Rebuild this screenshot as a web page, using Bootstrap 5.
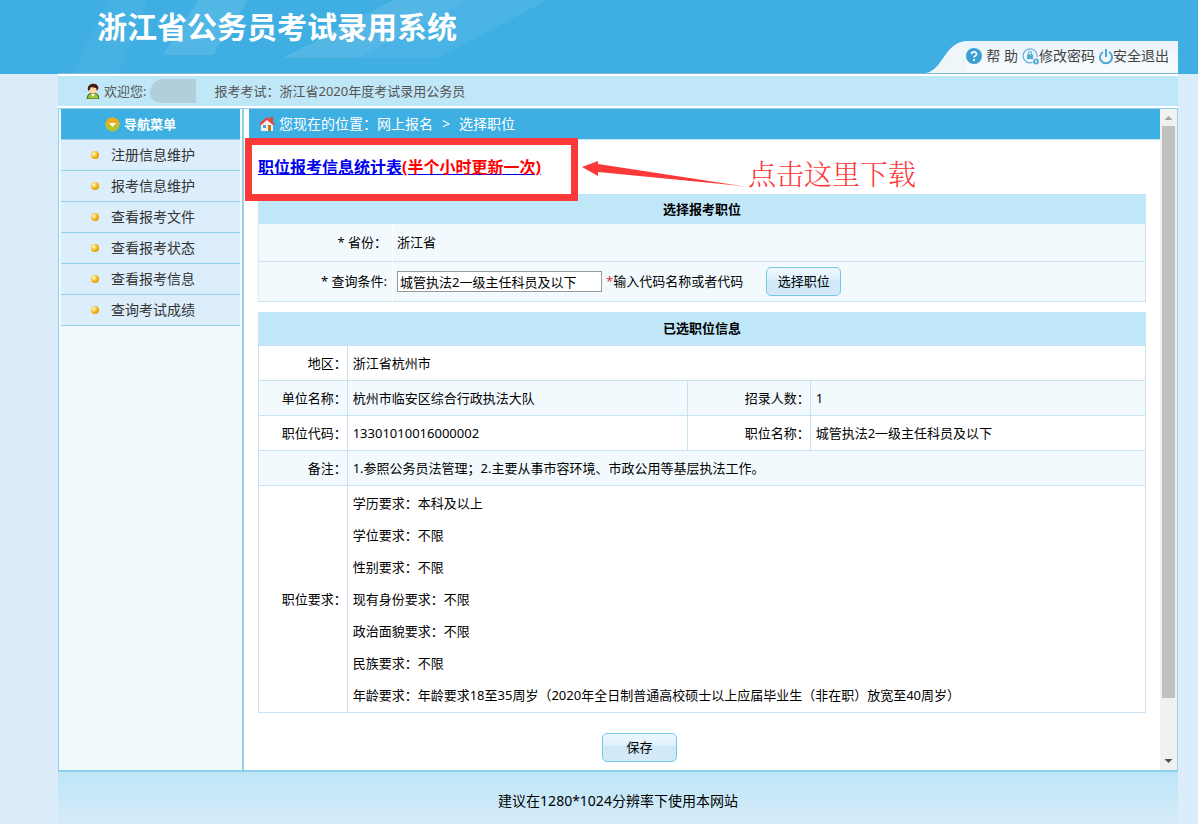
<!DOCTYPE html>
<html lang="zh-CN">
<head>
<meta charset="utf-8">
<meta name="viewport" content="width=device-width, initial-scale=1">
<title>浙江省公务员考试录用系统</title>
<link href="https://cdn.jsdelivr.net/npm/bootstrap@5.3.0/dist/css/bootstrap.min.css" rel="stylesheet">
<style>
:root{--line:#94d1e8;--cell-line:#c8e2f2;--bar:#3eafe2;--pale:#c0e7f8}
body{background:#dbecfa;font:13px/20px "Noto Sans","Noto Sans CJK SC",sans-serif;color:#000;min-height:100vh}
.page-top{background:#3fafe3;padding:0 20px 0 58px}
.page-body{padding:0 20px 0 58px}
.banner{height:74px;position:relative;border-bottom:1px solid #7fb9d0}
.rays{position:absolute;inset:0;width:520px;height:73px}
.site-title{font-size:30px;line-height:36px;font-weight:700;color:#fff;padding:9px 0 0 39px;position:relative;margin:0}
.tools{position:absolute;right:0;bottom:0;height:32px;font-size:14px}
.tools .tab-curve{width:40px;height:32px;flex:none}
.tools-in{background:linear-gradient(#eaf3f9,#f8fbfd);padding-right:9px;padding-bottom:2px}
.tools a{color:#444;text-decoration:none}
.welcome{background:var(--pale);height:34px;border-top:2px solid #fff;border-bottom:2px solid #fff;color:#555;padding-left:28px}
.masked{width:46px;height:24px;background:#b1cedb;border-radius:14px 0 0 10px;margin:0 18px 0 4px}
.frame{border:1px solid var(--line);border-bottom:2px solid #8dd0ea;background:#fff;min-height:663px}
.side{width:185px;border-right:2px solid var(--line);background:#f1fafd;padding:0 2px 0 2px;flex:none}
.side-head{background:var(--bar);height:31px;border-bottom:1px solid var(--line);color:#fff;font-weight:700;padding-left:44px}
.side-item{height:31px;border-bottom:1px solid var(--line);background:#dcedfb;color:#333;font-size:14px;text-decoration:none;padding-left:30px;gap:12px}
.dot{width:8px;height:8px;border-radius:50%;background:radial-gradient(circle at 35% 35%,#fff0a0 10%,#f5b921 45%,#c77d00)}
.crumb{background:var(--bar);height:31px;border-bottom:1px solid var(--pale);color:#fff;font-size:14px;padding-left:10px;margin-left:5px}
.crumb a{color:#fff;text-decoration:none}
.crumb-sep{margin:0 9px}
.inner{padding:0 14px 8px 14px}
.stat-row{height:54px;padding-top:16px;position:relative}
.stat{font-size:16px;line-height:22px;font-weight:700;color:#00e}
.stat span{color:red}
.callout{position:absolute;left:-13px;top:-2px;width:333px;height:63px;border:7px solid #fc3838;pointer-events:none}
.arrow{position:absolute;left:324px;top:18px;width:170px;height:34px}
.note{position:absolute;left:490px;top:15px;font:300 28px/36px "Noto Serif CJK SC","Noto Sans CJK SC",serif;color:#fc3838;white-space:nowrap}
.form-table,.info{width:100%;border-collapse:collapse}
.form-table caption,.info caption{caption-side:top;background:var(--pale);color:#000;text-align:center;font-weight:700;padding:0}
.form-table caption{height:30px;line-height:30px}
.info caption{height:33px;line-height:33px}
.form-table{border-left:1px solid #d8edf8;border-right:1px solid var(--cell-line);background:#f3fafe}
.form-table th,.info th{font-weight:400;text-align:right}
.form-table th{width:134px;padding-right:5px;border-right:1px solid #fff}
.form-table td{padding-left:4px}
.form-table tr{height:37px}
.form-table tr+tr{height:40px;border-top:1px solid var(--cell-line);border-bottom:1px solid var(--cell-line)}
.query{width:205px;height:21px;border:1px solid #999;background:#fff;padding:0 2px;font:inherit;line-height:19px;color:#000}
.ask{border:1px solid #78c8e8;border-radius:5px;width:75px;height:29px;font:inherit;padding:0;color:#000;background:linear-gradient(#eef8ff,#e0f1fc 42%,#cfe8f8 44%,#d4e9f8)}
.ask:hover{border-color:#3eafe2;color:#000}
.tip{margin-right:23px}
.info{margin-top:10px}
.info th,.info td{border:1px solid var(--cell-line);height:35px;padding:0 5px}
.info th{padding:0}
.info tr:nth-child(even){background:#f3fafe}
.info ul{line-height:32px;padding:1px 0;margin:0}
.save-row{padding:20px 125px 0 0;text-align:center}
.foot{font-size:14px;background:linear-gradient(#bde6f7,#d6ebf9);height:53px;padding-top:6px}
.bar-y{width:17px;background:#f1f1f1;flex:none}
.thumb{width:13px;height:572px;background:#c1c1c1}
</style>
</head>
<body class="d-flex flex-column">
<header class="page-top">
  <div class="banner">
    <svg class="rays" viewBox="0 0 520 73" preserveAspectRatio="none" aria-hidden="true">
      <path d="M50 0H90L60 73H15Z" fill="#fff" opacity=".04"/><path d="M140 0H190L155 55H105Z" fill="#fff" opacity=".1"/><path d="M335 0H410L300 58H225Z" fill="#fff" opacity=".06"/><path d="M335 0H490L380 58H225Z" fill="#fff" opacity=".05"/>
    </svg>
    <h1 class="site-title">浙江省公务员考试录用系统</h1>
    <nav class="tools d-flex">
      <svg class="tab-curve" viewBox="0 0 40 32" aria-hidden="true"><path d="M0 32C17 29 18 2 40 0V32Z" fill="#eff6fa"/></svg>
      <div class="tools-in d-flex align-items-center">
        <a href="#" class="d-flex align-items-center gap-1 me-1"><svg width="16" height="16" viewBox="0 0 16 16"><circle cx="8" cy="8" r="8" fill="#3a9fd2"/><path d="M5.5 6.2C5.5 3.2 10.5 3.2 10.5 6C10.5 7.8 8 7.7 8 9.6" fill="none" stroke="#fff" stroke-width="1.7"/><circle cx="8" cy="12" r="1.1" fill="#fff"/></svg>帮 助</a>
        <a href="#" class="d-flex align-items-center me-1"><svg width="17" height="18" viewBox="0 0 17 18" fill="none" stroke="#5bb0d8" stroke-width="1.2"><path d="M10.500 15.400A7 7 0 1 1 15 10"/><rect x="5.500" y="8" width="5" height="3.500" fill="#4ba9d5"/><path d="M6.500 8V6a1.500 1.500 0 0 1 3 0V8"/><circle cx="14" cy="14.500" r="2" stroke-width="2"/></svg>修改密码</a>
        <a href="#" class="d-flex align-items-center"><svg width="14" height="17" viewBox="0 0 14 17" fill="none" stroke="#4ba9d5" stroke-width="2"><path d="M4 4A6 6 0 1 0 10 4M7 1V9"/></svg>安全退出</a>
      </div>
    </nav>
  </div>
</header>
<div class="page-body flex-grow-1">
  <div class="welcome d-flex align-items-center">
    <svg width="14" height="16" viewBox="0 0 14 16" class="me-1" aria-hidden="true"><path d="M1 16L2 12L5 10H9L12 12L13 16Z" fill="#9bc33b" stroke="#426b18"/><path d="M5 11L7 14L9 11Z" fill="#fff"/><circle cx="7" cy="6.500" r="4" fill="#ffd5a0"/><path d="M2 7C0 0 12-2 12.500 5L11 8L10 5L5 4L3 8Z" fill="#4b1712"/></svg>
    <span>欢迎您:</span><span class="masked"></span><span>报考考试：浙江省2020年度考试录用公务员</span>
  </div>
  <div class="frame d-flex">
    <nav class="side">
      <div class="side-head d-flex align-items-center"><svg width="15" height="15" viewBox="0 0 15 15" class="me-1" aria-hidden="true"><circle cx="7.500" cy="7.500" r="7" fill="#b5c72b"/><path d="M.5 7.500A7 7 0 0 1 14.500 7.500Z" fill="#efad1d"/><path d="M4 6H11L7.500 10Z" fill="#fff"/></svg>导航菜单</div>
      <a href="#" class="side-item d-flex align-items-center"><i class="dot"></i>注册信息维护</a>
      <a href="#" class="side-item d-flex align-items-center"><i class="dot"></i>报考信息维护</a>
      <a href="#" class="side-item d-flex align-items-center"><i class="dot"></i>查看报考文件</a>
      <a href="#" class="side-item d-flex align-items-center"><i class="dot"></i>查看报考状态</a>
      <a href="#" class="side-item d-flex align-items-center"><i class="dot"></i>查看报考信息</a>
      <a href="#" class="side-item d-flex align-items-center"><i class="dot"></i>查询考试成绩</a>
    </nav>
    <main class="flex-grow-1">
      <div class="crumb d-flex align-items-center"><svg width="16" height="16" viewBox="0 0 16 16" class="me-1" aria-hidden="true"><path d="M2 8L8 3L14 8V15H2Z" fill="#f5f0ea"/><path d="M11 1H14V6L11 4Z" fill="#d94a3a"/><path d="M0 8L8 1L16 8L14 9L8 4L2 9Z" fill="#ee4138"/><rect x="9" y="9" width="3" height="6" fill="#b87a18"/><rect x="4" y="9" width="3" height="3" fill="#5b9ad0"/></svg>您现在的位置：<a href="#">网上报名</a><span class="crumb-sep">&gt;</span><span>选择职位</span></div>
      <div class="inner">
        <div class="stat-row">
          <a href="#" class="stat">职位报考信息统计表<span>(半个小时更新一次)</span></a>
          <div class="callout"></div>
          <svg class="arrow" viewBox="0 0 170 34" aria-hidden="true"><path d="M0 9L16 3L16 6L166 29L150 27L16 14V18Z" fill="#fc3838"/></svg>
          <span class="note">点击这里下载</span>
        </div>
        <table class="form-table">
          <caption>选择报考职位</caption>
          <tbody>
          <tr><th scope="row">* 省份：</th><td>浙江省</td></tr>
          <tr><th scope="row"><label for="q">* 查询条件:</label></th><td><div class="d-flex align-items-center"><input id="q" class="query me-1" type="text" value="城管执法2一级主任科员及以下"><span class="tip"><span class="text-danger">*</span>输入代码名称或者代码</span><button type="button" class="btn ask">选择职位</button></div></td></tr>
          </tbody>
        </table>
        <table class="info">
          <caption>已选职位信息</caption>
          <colgroup><col style="width:10%"><col style="width:38.400%"><col style="width:13.800%"><col></colgroup>
          <tbody>
          <tr><th scope="row">地区：</th><td colspan="3">浙江省杭州市</td></tr>
          <tr><th scope="row">单位名称：</th><td>杭州市临安区综合行政执法大队</td><th scope="row">招录人数：</th><td>1</td></tr>
          <tr><th scope="row">职位代码：</th><td>13301010016000002</td><th scope="row">职位名称：</th><td>城管执法2一级主任科员及以下</td></tr>
          <tr><th scope="row">备注：</th><td colspan="3">1.参照公务员法管理；2.主要从事市容环境、市政公用等基层执法工作。</td></tr>
          <tr><th scope="row">职位要求：</th><td colspan="3"><ul class="list-unstyled"><li>学历要求：本科及以上</li><li>学位要求：不限</li><li>性别要求：不限</li><li>现有身份要求：不限</li><li>政治面貌要求：不限</li><li>民族要求：不限</li><li>年龄要求：年龄要求18至35周岁（2020年全日制普通高校硕士以上应届毕业生（非在职）放宽至40周岁）</li></ul></td></tr>
          </tbody>
        </table>
        <div class="save-row"><button type="button" class="btn ask">保存</button></div>
      </div>
    </main>
    <div class="bar-y d-flex flex-column align-items-center justify-content-between" aria-hidden="true">
      <div class="d-flex flex-column align-items-center"><svg width="17" height="17"><path d="M4.500 11H12.500L8.500 7Z" fill="#a3a3a3"/></svg><div class="thumb"></div></div>
      <svg width="17" height="17"><path d="M4.500 6H12.500L8.500 10Z" fill="#505050"/></svg>
    </div>
  </div>
  <footer class="foot d-flex align-items-center justify-content-center">建议在1280*1024分辨率下使用本网站</footer>
</div>
<script src="https://cdn.jsdelivr.net/npm/bootstrap@5.3.0/dist/js/bootstrap.bundle.min.js"></script>
</body>
</html>
